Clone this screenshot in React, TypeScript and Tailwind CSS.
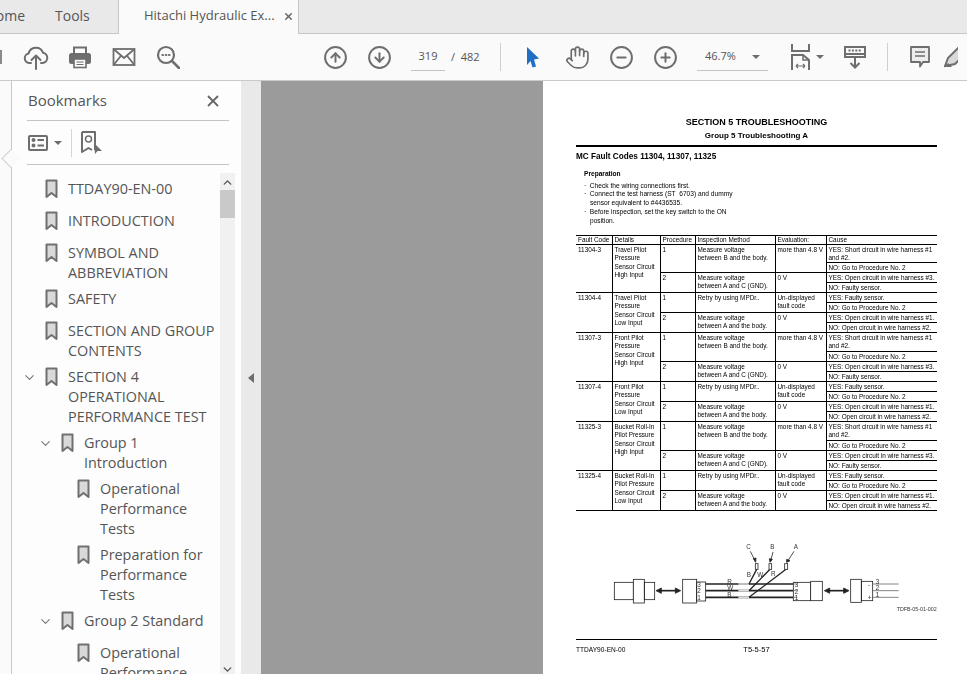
import React from "react";
import { ChevronDown, ChevronUp, CircleArrowDown, CircleArrowUp, CircleMinus, CirclePlus, Hand, X } from "lucide-react";

const ui = "font-['Open_Sans',sans-serif]";
const doc = "font-['Liberation_Sans',Arial,sans-serif]";

type Mark = { level: number; lines: string[]; open?: boolean };

const marks: Mark[] = [
  { level: 0, lines: ["TTDAY90-EN-00"] },
  { level: 0, lines: ["INTRODUCTION"] },
  { level: 0, lines: ["SYMBOL AND", "ABBREVIATION"] },
  { level: 0, lines: ["SAFETY"] },
  { level: 0, lines: ["SECTION AND GROUP", "CONTENTS"] },
  { level: 0, lines: ["SECTION 4", "OPERATIONAL", "PERFORMANCE TEST"], open: true },
  { level: 1, lines: ["Group 1", "Introduction"], open: true },
  { level: 2, lines: ["Operational", "Performance", "Tests"] },
  { level: 2, lines: ["Preparation for", "Performance", "Tests"] },
  { level: 1, lines: ["Group 2 Standard"], open: true },
  { level: 2, lines: ["Operational", "Performance", "Tests"] },
];

type Fault = { code: string; details: string[]; high: boolean };

const faults: Fault[] = [
  { code: "11304-3", details: ["Travel Pilot", "Pressure", "Sensor Circuit", "High Input"], high: true },
  { code: "11304-4", details: ["Travel Pilot", "Pressure", "Sensor Circuit", "Low Input"], high: false },
  { code: "11307-3", details: ["Front Pilot", "Pressure", "Sensor Circuit", "High Input"], high: true },
  { code: "11307-4", details: ["Front Pilot", "Pressure", "Sensor Circuit", "Low Input"], high: false },
  { code: "11325-3", details: ["Bucket Roll-In", "Pilot Pressure", "Sensor Circuit", "High Input"], high: true },
  { code: "11325-4", details: ["Bucket Roll-In", "Pilot Pressure", "Sensor Circuit", "Low Input"], high: false },
];

function BookmarkIcon() {
  return (
    <svg width="13" height="20" viewBox="0 0 13 20" className="shrink-0">
      <path d="M1.5 1.5H11.5V18L6.5 14L1.5 18Z" fill="#d9d9d9" stroke="#707070" strokeWidth="2" strokeLinejoin="round" />
    </svg>
  );
}

function Slot({ children }: { children: React.ReactNode }) {
  return <div className="flex h-full w-11 shrink-0 items-center justify-center">{children}</div>;
}

function Caret() {
  return <div className="h-0 w-0 border-x-[4px] border-t-[4px] border-x-transparent border-t-[#6d6d6d]" />;
}

function Toolbar() {
  const icon = "#6e6e6e";
  return (
    <div className="flex h-[47px] items-center border-b border-[#c9c9c9] bg-[#fafafa] pl-[14px] text-[11px] text-[#555]">
      <div className="-ml-[14px] mr-[12px] h-[14px] w-[2px] bg-[#8a8a8a]" />
      <Slot>
        <svg width="26" height="26" viewBox="0 0 26 26" fill="none" stroke={icon} strokeWidth="2" strokeLinecap="round" strokeLinejoin="round">
          <path d="M8 19H6.5A4.8 4.8 0 0 1 5.6 9.5A7.5 7.5 0 0 1 20 8.7A5.2 5.2 0 0 1 19.5 19H18" />
          <path d="M13 25V12M8.5 16L13 11.5L17.5 16" />
        </svg>
      </Slot>
      <Slot>
        <svg width="24" height="24" viewBox="0 0 24 24">
          <path d="M6 8V2.5H18V8" fill="none" stroke={icon} strokeWidth="2" />
          <rect x="1" y="8" width="22" height="11" rx="2.5" fill={icon} />
          <rect x="6" y="14" width="12" height="8.5" fill="#fafafa" stroke={icon} strokeWidth="1.6" />
          <path d="M8.5 17H15.5M8.5 19.5H15.5" stroke={icon} />
        </svg>
      </Slot>
      <Slot>
        <svg width="24" height="20" viewBox="0 0 24 20" fill="none" stroke={icon} strokeWidth="1.8">
          <rect x="1.5" y="2" width="21" height="16" />
          <path d="M1.5 2L12 11L22.5 2M1.5 18L9 8.8M22.5 18L15 8.8" />
        </svg>
      </Slot>
      <Slot>
        <svg width="24" height="24" viewBox="0 0 24 24" fill="none" stroke={icon} strokeWidth="2.2" strokeLinecap="round">
          <circle cx="10" cy="10" r="8" />
          <path d="M16 16L23 23" strokeWidth="2.6" />
          <path d="M6.5 10H7M9.8 10H10.3M13 10H13.5" />
        </svg>
      </Slot>
      <div className="w-[123px] shrink-0" />
      <Slot><CircleArrowUp size={25} strokeWidth={1.9} color={icon} /></Slot>
      <Slot><CircleArrowDown size={25} strokeWidth={1.9} color={icon} /></Slot>
      <div className="ml-[10px] flex h-[28px] w-[34px] shrink-0 items-center justify-center border-b border-[#c4c4c4]">319</div>
      <div className="ml-[6px] w-[49px] shrink-0">/&nbsp; 482</div>
      <div className="h-[28px] w-px shrink-0 bg-[#cfcfcf]" />
      <div className="ml-[10px]" />
      <Slot>
        <svg width="14" height="22" viewBox="0 0 14 22">
          <path d="M1 1L13 12.5L8 13.5L10 20.5L6.5 21.5L4.5 15L1 19Z" fill="#1f6fc4" />
        </svg>
      </Slot>
      <Slot><Hand size={25} strokeWidth={1.6} color={icon} /></Slot>
      <Slot><CircleMinus size={25} strokeWidth={1.9} color={icon} /></Slot>
      <Slot><CirclePlus size={25} strokeWidth={1.9} color={icon} /></Slot>
      <div className="ml-[10px] flex h-[28px] w-[71px] shrink-0 items-center gap-[16px] border-b border-[#c4c4c4] pl-[8px]">
        <span>46.7%</span>
        <Caret />
      </div>
      <div className="ml-[23px] flex shrink-0 items-center gap-[5px]">
        <svg width="20" height="26" viewBox="0 0 20 26" fill="none" stroke={icon} strokeWidth="2">
          <path d="M1 0V7H18V0M1 26V11H12L18 16V26" />
          <path d="M12 11V16H18" strokeWidth="1.5" />
          <path d="M5 22H14M5 22L7 20M5 22L7 24M14 22L12 20M14 22L12 24" strokeWidth="1.2" />
        </svg>
        <Caret />
      </div>
      <div className="ml-[19px] w-[24px] shrink-0">
        <svg width="24" height="24" viewBox="0 0 24 24" fill="none" stroke={icon} strokeWidth="2">
          <rect x="2" y="2" width="20" height="7" />
          <path d="M5.5 5.5H18.5" strokeDasharray="2 1.4" />
          <path d="M2 9V12H22V9M12 12V22.5M7.5 18L12 22.5L16.5 18" />
        </svg>
      </div>
      <div className="ml-[20px] h-[28px] w-px shrink-0 bg-[#cfcfcf]" />
      <div className="ml-[22px] w-[20px] shrink-0">
        <svg width="20" height="22" viewBox="0 0 20 22" fill="none" stroke={icon} strokeWidth="1.8" strokeLinejoin="round">
          <path d="M1 1H19V16H13L10 20.5V16H1Z" fill="#ececec" />
          <path d="M5 6H15M5 10H15" strokeWidth="1.3" />
        </svg>
      </div>
      <div className="ml-[14px] w-[14px] shrink-0 overflow-hidden">
        <svg width="24" height="24" viewBox="0 0 24 24">
          <path d="M1 21L4 13L14 3L21 9L11 19Z" fill="#d9d9d9" stroke={icon} strokeWidth="2" />
          <path d="M1 22H8L4 18Z" fill={icon} />
        </svg>
      </div>
    </div>
  );
}

function Sidebar() {
  return (
    <div className={`${ui} flex h-full w-[261px] shrink-0`}>
      <div className="relative w-[12px] shrink-0 border-r border-[#c9c9c9] bg-[#fafafa]">
        <div className="absolute left-[4px] top-[71px] h-[13px] w-[13px] rotate-45 border-b border-l border-[#d0d0d0] bg-[#fafafa]" />
      </div>
      <div className="flex w-[229px] shrink-0 flex-col bg-[#fdfdfd]">
        <div className="ml-[15px] flex h-[40px] w-[202px] shrink-0 items-center justify-between border-b border-[#c4c4c4] pl-px pr-[7px] text-[15px] text-[#555]">
          <span>Bookmarks</span>
          <X size={18} strokeWidth={2.4} color="#666" />
        </div>
        <div className="ml-[15px] flex h-[44px] w-[202px] shrink-0 items-center border-b border-[#c4c4c4]">
          <svg width="20" height="16" viewBox="0 0 20 16" fill="none" stroke="#6e6e6e" strokeWidth="2" className="ml-px">
            <rect x="1" y="1" width="18" height="14" rx="1" />
            <path d="M9.5 5H16M9.5 10.5H16" />
            <circle cx="5.5" cy="5" r="1" fill="#6e6e6e" />
            <circle cx="5.5" cy="10.5" r="1" fill="#6e6e6e" />
          </svg>
          <div className="ml-[6px]"><Caret /></div>
          <div className="ml-[9px] h-[28px] w-px bg-[#d4d4d4]" />
          <svg width="22" height="24" viewBox="0 0 22 24" fill="none" stroke="#6e6e6e" strokeWidth="2" className="ml-[9px]">
            <path d="M1 1H14V19M1 1V21L7.5 17L11 19" strokeLinejoin="round" />
            <circle cx="7.5" cy="8" r="3" strokeWidth="1.5" />
            <path d="M13 12L21 20L16.5 20L14 23Z" fill="#6e6e6e" stroke="none" />
          </svg>
        </div>
        <div className="flex min-h-0 flex-1 overflow-hidden pl-[10px]">
          <div className="w-[198px] shrink-0 overflow-hidden pt-[8px]">
            {marks.map((m, i) => (
              <div key={i} className={`flex min-h-[32px] items-start pt-[6px] text-[14.4px] leading-[20px] text-[#555] ${m.level === 0 ? "pl-0" : m.level === 1 ? "pl-[16px]" : "pl-[32px]"}`}>
                <div className="flex h-[20px] w-[15px] shrink-0 items-center">
                  {m.open && <ChevronDown size={15} strokeWidth={1.8} color="#777" className="shrink-0" />}
                </div>
                <div className="ml-[8px] mr-[10px]"><BookmarkIcon /></div>
                <div className="whitespace-nowrap">
                  {m.lines.map((l) => <div key={l}>{l}</div>)}
                </div>
              </div>
            ))}
          </div>
          <div className="mt-[8px] flex w-[15px] shrink-0 flex-col items-center bg-[#f1f1f1] pt-[3px]">
            <ChevronUp size={13} strokeWidth={2.6} color="#555" />
            <div className="mt-[1px] h-[28px] w-full bg-[#c9c9c9]" />
            <div className="flex-1" />
            <ChevronDown size={13} strokeWidth={2.6} color="#555" className="-mb-[2px]" />
          </div>
          <div className="w-[6px] shrink-0" />
        </div>
      </div>
      <div className="flex w-[20px] shrink-0 items-center justify-center bg-[#e9e9e9]">
        <div className="mt-[1px] h-0 w-0 border-y-[5px] border-r-[6px] border-y-transparent border-r-[#6d6d6d]" />
      </div>
    </div>
  );
}

function Diagram() {
  return (
    <svg viewBox="18 20 1083 240" width="361" height="80" fill="none" stroke="#222" strokeWidth="2.4" className="block">
      <rect x="133" y="153" width="57" height="52" />
      <rect x="190" y="144" width="33" height="71" fill="#fff" />
      <rect x="223" y="153" width="31" height="52" />
      <path d="M270 178H320" strokeWidth="5" />
      <path d="M258 178L274 170V186ZM332 178L316 170V186Z" fill="#222" />
      <rect x="338" y="144" width="42" height="71" />
      <rect x="380" y="152" width="27" height="57" />
      <path d="M407 158H670M407 178H670M407 198H670" strokeWidth="5" />
      <path d="M505 158H537M505 178H537M505 198H537" stroke="#ddd" strokeWidth="5" />
      <path d="M537 158L560 114M537 178L600 114M537 198L648 114" strokeWidth="4" />
      <rect x="556" y="97" width="8" height="17" fill="#fff" />
      <rect x="597" y="97" width="8" height="17" fill="#fff" />
      <rect x="644" y="97" width="9" height="17" fill="#fff" />
      <path d="M541 60L555 88M609 62L602 88M672 60L654 88" />
      <path d="M550 82L557 93L558 80ZM598 82L600 93L607 84ZM650 84L650 93L660 88Z" fill="#222" />
      <rect x="670" y="153" width="52" height="55" fill="#fff" />
      <path d="M670 158H682M670 178H682M670 198H682" stroke="#777" />
      <rect x="722" y="150" width="35" height="58" fill="#fff" />
      <path d="M775 178H825" strokeWidth="5" />
      <path d="M763 178L779 170V186ZM837 178L821 170V186Z" fill="#222" />
      <rect x="842" y="144" width="32" height="69" />
      <rect x="874" y="150" width="34" height="58" />
      <path d="M908 158H986M908 178H986M908 198H986" stroke="#666" />
      <g fill="#333" stroke="none" fontSize="19" fontFamily="Liberation Sans, Arial, sans-serif">
        <text x="529" y="54">C</text>
        <text x="601" y="54">B</text>
        <text x="671" y="54">A</text>
        <text x="530" y="136">B</text>
        <text x="562" y="136">W</text>
        <text x="603" y="134">R</text>
        <text x="472" y="157">R</text>
        <text x="472" y="177">W</text>
        <text x="472" y="197">B</text>
        <text x="382" y="166">3</text>
        <text x="382" y="185">2</text>
        <text x="382" y="206">1</text>
        <text x="674" y="166">3</text>
        <text x="674" y="187">2</text>
        <text x="674" y="205">1</text>
        <text x="894" y="166">-</text>
        <text x="893" y="206">+</text>
        <text x="917" y="157">3</text>
        <text x="917" y="177">2</text>
        <text x="917" y="197">1</text>
        <text x="1100" y="239" textAnchor="end" fontSize="16">TDFB-05-01-002</text>
      </g>
    </svg>
  );
}

const head = "overflow-hidden border-b border-black px-[2px] text-left align-top font-normal";
const cell = "overflow-hidden border-b border-black px-[2px] pt-[1px] align-top";
const cellR = `${cell} border-r leading-[8.5px]`;

function FaultRows({ fault, tight }: { fault: Fault; tight: boolean }) {
  const first = tight ? "h-[18px]" : fault.high ? "h-[19px]" : "h-[10px]";
  return (
    <>
      <tr className={first}>
        <td rowSpan={4} className={cellR}>{fault.code}</td>
        <td rowSpan={4} className={cellR}>{fault.details.map((d) => <div key={d}>{d}</div>)}</td>
        <td rowSpan={2} className={cellR}>1</td>
        <td rowSpan={2} className={cellR}>
          {fault.high ? <><div>Measure voltage</div><div>between B and the body.</div></> : "Retry by using MPDr.."}
        </td>
        <td rowSpan={2} className={cellR}>
          {fault.high ? "more than 4.8 V" : <><div>Un-displayed</div><div>fault code</div></>}
        </td>
        <td className={cell}>
          {fault.high ? <><div>YES: Short circuit in wire harness #1</div><div>and #2.</div></> : "YES: Faulty sensor."}
        </td>
      </tr>
      <tr className="h-[10px]">
        <td className={cell}>NO: Go to Procedure No. 2</td>
      </tr>
      <tr className="h-[10px]">
        <td rowSpan={2} className={cellR}>2</td>
        <td rowSpan={2} className={cellR}>
          <div>Measure voltage</div>
          <div>{fault.high ? "between A and C (GND)." : "between A and the body."}</div>
        </td>
        <td rowSpan={2} className={cellR}>0 V</td>
        <td className={cell}>{fault.high ? "YES: Open circuit in wire harness #3." : "YES: Open circuit in wire harness #1."}</td>
      </tr>
      <tr className="h-[10px]">
        <td className={cell}>{fault.high ? "NO: Faulty sensor." : "NO: Open circuit in wire harness #2."}</td>
      </tr>
    </>
  );
}

function PdfPage() {
  return (
    <div className={`${doc} h-full min-w-0 flex-1 overflow-hidden bg-white pl-[33px] pr-[30px] pt-[35px] text-black blur-[0.3px]`}>
      <div className="text-center text-[9px] font-bold leading-[13px]">SECTION 5 TROUBLESHOOTING</div>
      <div className="text-center text-[8px] font-bold leading-[13px]">Group 5 Troubleshooting A</div>
      <div className="mt-[3px] h-[2px] bg-black" />
      <div className="mt-[4px] text-[8.2px] font-bold leading-[12px]">MC Fault Codes 11304, 11307, 11325</div>
      <div className="ml-[8px] mt-[6px] text-[6.6px] font-bold leading-[10px]">Preparation</div>
      <ul className="ml-[8px] mt-[2.5px] text-[6.6px] leading-[8.8px]">
        <li>·&nbsp; Check the wiring connections first.</li>
        <li>·&nbsp; Connect the test harness (ST&nbsp; 6703) and dummy</li>
        <li className="pl-[6px]">sensor equivalent to #4436535.</li>
        <li>·&nbsp; Before inspection, set the key switch to the ON</li>
        <li className="pl-[6px]">position.</li>
      </ul>
      <table className="mt-[9.5px] w-[361px] table-fixed border-collapse whitespace-nowrap border-t border-black text-[6.4px] leading-[8px]">
        <colgroup>
          <col className="w-[36px]" />
          <col className="w-[48px]" />
          <col className="w-[35px]" />
          <col className="w-[80px]" />
          <col className="w-[51px]" />
          <col className="w-[111px]" />
        </colgroup>
        <thead>
          <tr className="h-[9px]">
            <th className={`${head} border-r`}>Fault Code</th>
            <th className={`${head} border-r`}>Details</th>
            <th className={`${head} border-r`}>Procedure</th>
            <th className={`${head} border-r`}>Inspection Method</th>
            <th className={`${head} border-r`}>Evaluation:</th>
            <th className={head}>Cause</th>
          </tr>
        </thead>
        <tbody>
          {faults.map((f, i) => <FaultRows key={f.code} fault={f} tight={i === 0} />)}
        </tbody>
      </table>
      <div className="mt-[27px]"><Diagram /></div>
      <div className="mt-[21px] h-px bg-black" />
      <div className="mt-[5px] flex text-[6.6px] leading-[9px]">
        <span>TTDAY90-EN-00</span>
        <span className="ml-[118px] text-[7.5px]">T5-5-57</span>
      </div>
    </div>
  );
}

export default function App() {
  return (
    <div className="flex h-[674px] w-[967px] flex-col overflow-hidden bg-[#fafafa]">
      <div className={`${ui} flex h-[34px] shrink-0 border-b border-[#c6c6c6] bg-[#e9e9e9] pb-[2px] text-[14px] text-[#555]`}>
        <div className="flex w-[25px] shrink-0 items-center justify-end overflow-hidden">
          <span className="shrink-0">Home</span>
        </div>
        <div className="ml-[30px] flex w-[63px] shrink-0 items-center">Tools</div>
        <div className="-mb-[3px] flex w-[181px] shrink-0 items-center border-x border-[#c6c6c6] bg-[#fafafa] pb-[2px] pl-[25px] text-[13px]">
          <span className="whitespace-nowrap">Hitachi Hydraulic Ex...</span>
          <X size={11} strokeWidth={3.2} color="#666" className="ml-[8px]" />
        </div>
      </div>
      <div className={ui}><Toolbar /></div>
      <div className="flex min-h-0 flex-1">
        <Sidebar />
        <div className="h-full w-[282px] shrink-0 bg-[#9b9b9b]" />
        <PdfPage />
      </div>
    </div>
  );
}
